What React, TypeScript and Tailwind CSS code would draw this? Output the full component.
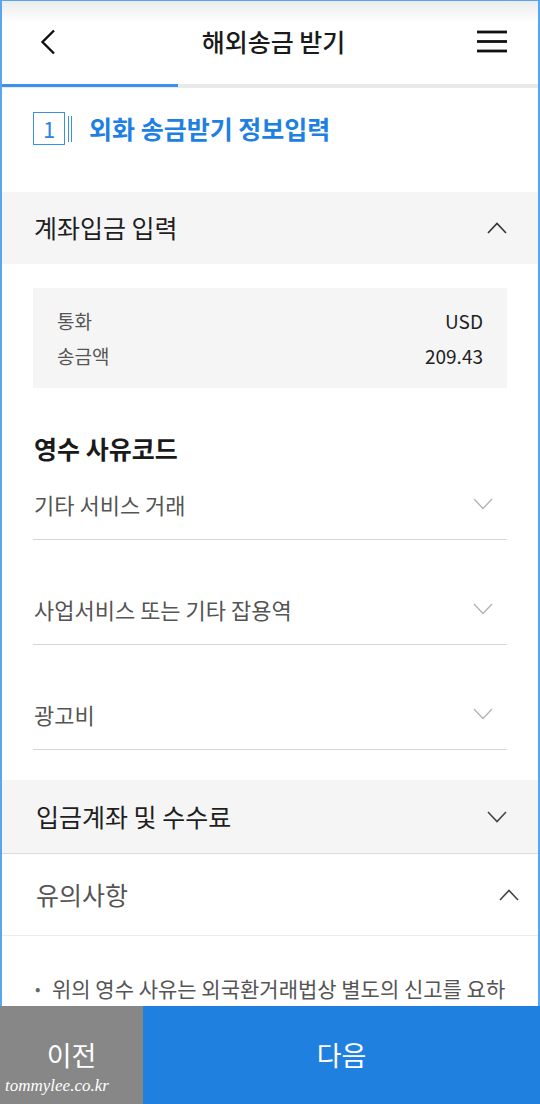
import React from 'react';

const FONT = '"Noto Sans CJK KR", "Noto Sans", sans-serif';

const Chevron = ({ dir, color = '#333', width = 20, stroke = 1.6 }: { dir: 'up' | 'down'; color?: string; width?: number; stroke?: number }) => (
  <svg width={width} height={12} viewBox="0 0 20 12" fill="none">
    {dir === 'up' ? (
      <polyline points="1,11 10,1.5 19,11" stroke={color} strokeWidth={stroke} />
    ) : (
      <polyline points="1,1 10,10.5 19,1" stroke={color} strokeWidth={stroke} />
    )}
  </svg>
);

const reasons = ['기타 서비스 거래', '사업서비스 또는 기타 잡용역', '광고비'];

const App = () => {
  return (
    <div className="w-[540px] h-[1104px] flex flex-col bg-white overflow-hidden" style={{ fontFamily: FONT }}>
      {/* Main content */}
      <div className="flex-1 min-h-0 overflow-hidden border-x-2 border-t border-[#5aa5f0]">
        {/* Header */}
        <div className="h-[82px] flex items-center justify-between pl-[38px] pr-[31px] bg-[linear-gradient(#ececec,#ffffff_22px)]">
          <svg width="16" height="26" viewBox="0 0 16 26" fill="none">
            <polyline points="14,1.5 2.5,13 14,24.5" stroke="#111" strokeWidth="2.4" />
          </svg>
          <h1 className="text-[25px] font-medium text-[#1a1a1a] ml-[14px]">해외송금 받기</h1>
          <svg width="30" height="24" viewBox="0 0 30 24" fill="none">
            <line x1="0" y1="2" x2="30" y2="2" stroke="#111" strokeWidth="2.8" />
            <line x1="0" y1="11.5" x2="30" y2="11.5" stroke="#111" strokeWidth="2.8" />
            <line x1="0" y1="21" x2="30" y2="21" stroke="#111" strokeWidth="2.8" />
          </svg>
        </div>

        {/* Progress */}
        <div className="h-[4px] bg-[#e9e9e9]">
          <div className="w-[176px] h-[3px] mt-[1px] bg-[#3a92ea]" />
        </div>

        {/* Step title */}
        <div className="h-[104px] pt-[22px] px-[31px]">
          <div className="flex items-center">
            <div className="w-[32px] h-[33px] border-[1.5px] border-[#3a8fe6] flex items-center justify-center text-[22px] text-[#2a86e4]">
              1
            </div>
            <div className="w-px h-[26px] bg-[#3a8fe6] ml-[3px]" />
            <div className="w-px h-[26px] bg-[#3a8fe6] ml-[2px]" />
            <span className="ml-[17px] text-[25px] font-bold text-[#1e80e2]">외화 송금받기 정보입력</span>
          </div>
        </div>

        {/* Section: 계좌입금 입력 */}
        <div className="h-[72px] bg-[#f5f5f5] flex items-center justify-between pl-[32px] pr-[31px]">
          <span className="text-[25px] text-[#1f1f1f]">계좌입금 입력</span>
          <Chevron dir="up" color="#333" />
        </div>

        <div className="px-[31px]">
          <div className="mt-[24px] h-[100px] bg-[#f5f5f5] px-[24px] py-[15px] text-[19px] leading-[35px]">
            <div className="flex justify-between">
              <span className="text-[#555]">통화</span>
              <span className="text-[#222]">USD</span>
            </div>
            <div className="flex justify-between">
              <span className="text-[#555]">송금액</span>
              <span className="text-[#222]">209.43</span>
            </div>
          </div>

          <h2 className="mt-[43px] text-[25px] leading-[34px] font-bold text-[#1a1a1a] pl-[1px]">영수 사유코드</h2>

          {reasons.map((r, i) => (
            <div
              key={r}
              className={`h-[71px] flex items-center justify-between border-b border-[#d6d6d6] pl-[1px] pr-[14px] ${i === 0 ? 'mt-[4px]' : 'mt-[34px]'}`}
            >
              <span className="text-[22px] text-[#555]">{r}</span>
              <Chevron dir="down" color="#b3b3b3" stroke={1.3} />
            </div>
          ))}
        </div>

        {/* Section: 입금계좌 및 수수료 */}
        <div className="mt-[30px] h-[74px] bg-[#f5f5f5] border-b border-[#dcdcdc] flex items-center justify-between pl-[34px] pr-[31px]">
          <span className="text-[25px] text-[#1f1f1f]">입금계좌 및 수수료</span>
          <Chevron dir="down" color="#444" />
        </div>

        {/* Section: 유의사항 */}
        <div className="h-[82px] border-b border-[#ececec] flex items-center justify-between pl-[34px] pr-[19px]">
          <span className="text-[25px] text-[#555]">유의사항</span>
          <Chevron dir="up" color="#444" />
        </div>

        <div className="pt-[34px] pl-[33px] pr-[31px]">
          <p className="relative pl-[17px] text-[21px] leading-[36px] text-[#555] whitespace-nowrap">
            <span className="absolute left-0 top-0 text-[16px] text-[#666]">•</span>
            위의 영수 사유는 외국환거래법상 별도의 신고를 요하
          </p>
        </div>
      </div>

      {/* Bottom buttons */}
      <div className="h-[98px] flex shrink-0 relative">
        <button className="w-[143px] bg-[#878787] text-white text-[27px]">이전</button>
        <button className="flex-1 bg-[#1f80e0] text-white text-[27px]">다음</button>
        <span
          className="absolute left-[5px] bottom-[6px] text-[17px] italic text-white"
          style={{ fontFamily: '"Liberation Serif", serif' }}
        >
          tommylee.co.kr
        </span>
      </div>
    </div>
  );
};

export default App;
